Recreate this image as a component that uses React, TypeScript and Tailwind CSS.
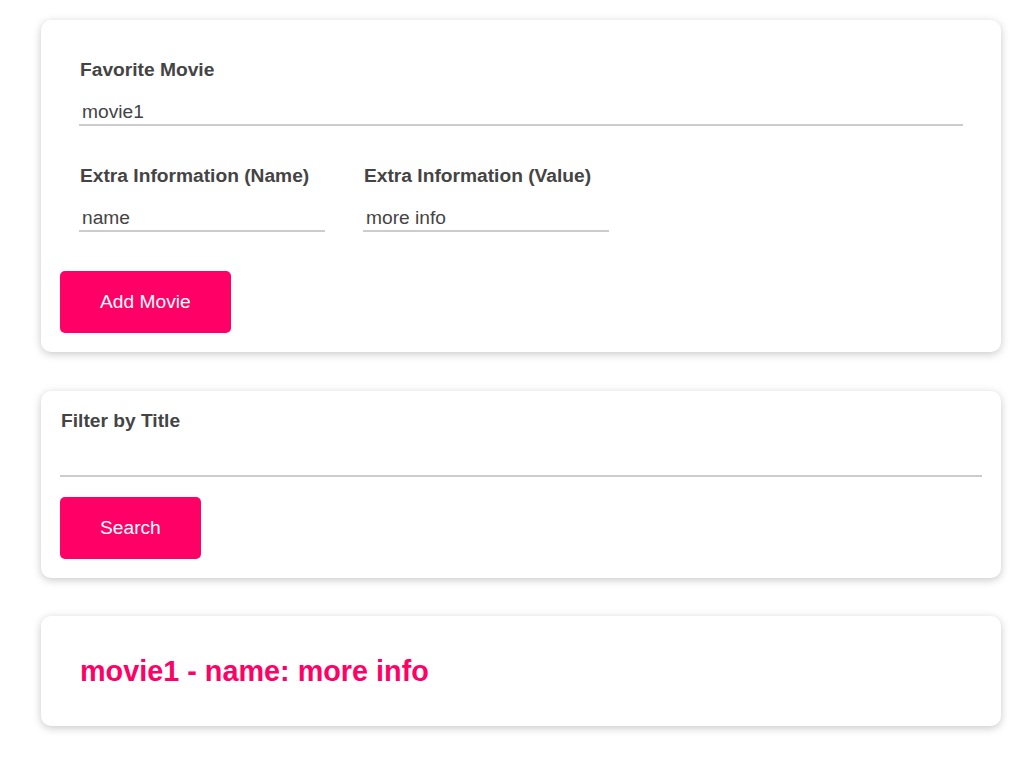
import { useState } from 'react';

interface Movie {
  title: string;
  name: string;
  value: string;
}

const cardClass =
  'ml-[41px] w-[960px] rounded-[10px] bg-white shadow-[0_2px_8px_rgba(0,0,0,0.22)]';

const inputClass =
  'block bg-transparent border-0 border-b-2 border-[#cccccc] px-[3px] pt-[3px] pb-[1px] text-[19.2px] leading-[22px] text-[#444444] outline-none';

const labelClass =
  'block pl-[1px] pt-[1px] text-[19.2px] leading-[22px] font-bold text-[#444444]';

const buttonClass =
  'rounded-[5px] bg-[#ff0066] px-[40px] py-[20px] text-[19.2px] leading-[22px] text-white';

export default function App() {
  const [title, setTitle] = useState('movie1');
  const [name, setName] = useState('name');
  const [value, setValue] = useState('more info');
  const [filter, setFilter] = useState('');
  const [movies, setMovies] = useState<Movie[]>([
    { title: 'movie1', name: 'name', value: 'more info' },
  ]);
  const [query, setQuery] = useState('');

  const handleAdd = () => {
    if (!title) return;
    setMovies((prev) => [...prev, { title, name, value }]);
  };

  // only show movies that match the applied filter
  const shown = movies.filter((m) =>
    m.title.toLowerCase().includes(query.toLowerCase())
  );

  return (
    <div
      className="min-h-screen bg-white pt-[20px] pb-[37px]"
      style={{ fontFamily: '"Liberation Sans", Arial, sans-serif' }}
    >
      <div className={`${cardClass} p-[19px]`}>
        <div className="p-[19px]">
          <label className={`${labelClass} mb-[17px]`}>Favorite Movie</label>
          <input
            className={`${inputClass} w-full`}
            value={title}
            onChange={(e) => setTitle(e.target.value)}
          />
        </div>
        <div className="flex">
          <div className="p-[19px]">
            <label className={`${labelClass} mb-[17px]`}>Extra Information (Name)</label>
            <input
              className={`${inputClass} w-[246px]`}
              value={name}
              onChange={(e) => setName(e.target.value)}
            />
          </div>
          <div className="p-[19px]">
            <label className={`${labelClass} mb-[17px]`}>Extra Information (Value)</label>
            <input
              className={`${inputClass} w-[246px]`}
              value={value}
              onChange={(e) => setValue(e.target.value)}
            />
          </div>
        </div>
        <button onClick={handleAdd} className={`${buttonClass} mt-[20px]`}>
          Add Movie
        </button>
      </div>

      <div className={`${cardClass} mt-[39px] px-[19px] pt-[18px] pb-[19px]`}>
        <label className={`${labelClass} mb-[17px]`}>Filter by Title</label>
        <input
          className={`${inputClass} w-full`}
          value={filter}
          onChange={(e) => setFilter(e.target.value)}
        />
        <button onClick={() => setQuery(filter)} className={`${buttonClass} mt-[20px]`}>
          Search
        </button>
      </div>

      {shown.slice(0, 1).map((m, i) => (
        <div key={i} className={`${cardClass} mt-[38px] p-[19px]`}>
          <div className="p-[19px] pl-[20px]">
            <h2 className="text-[28.8px] leading-[34px] font-bold text-[#ff0066]">
              {m.title} - {m.name}: {m.value}
            </h2>
          </div>
        </div>
      ))}
    </div>
  );
}
